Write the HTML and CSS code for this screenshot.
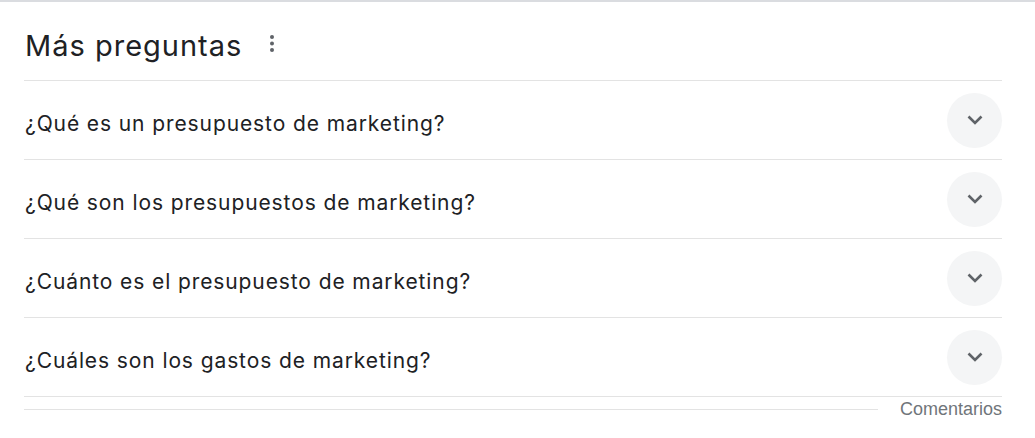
FILE: index.html
```html
<!DOCTYPE html>
<html>
<head>
	<title>Más preguntas</title>
	<link rel="stylesheet" href="styles.css">
</head>
<body>
	<div class="container">
		<div class="header">
			<h2>Más preguntas</h2>
			<span class="menu-dots">
				<svg width="4" height="17" viewBox="0 0 4 17"><circle cx="2" cy="2" r="2"/><circle cx="2" cy="8.5" r="2"/><circle cx="2" cy="15" r="2"/></svg>
			</span>
		</div>

		<div class="question">
			<span>¿Qué es un presupuesto de marketing?</span>
			<button class="expand"><svg width="16" height="10" viewBox="0 0 16 10"><path d="M1.5 1.5 8 8l6.5-6.5" /></svg></button>
		</div>
		<div class="question">
			<span>¿Qué son los presupuestos de marketing?</span>
			<button class="expand"><svg width="16" height="10" viewBox="0 0 16 10"><path d="M1.5 1.5 8 8l6.5-6.5" /></svg></button>
		</div>
		<div class="question">
			<span>¿Cuánto es el presupuesto de marketing?</span>
			<button class="expand"><svg width="16" height="10" viewBox="0 0 16 10"><path d="M1.5 1.5 8 8l6.5-6.5" /></svg></button>
		</div>
		<div class="question">
			<span>¿Cuáles son los gastos de marketing?</span>
			<button class="expand"><svg width="16" height="10" viewBox="0 0 16 10"><path d="M1.5 1.5 8 8l6.5-6.5" /></svg></button>
		</div>

		<div class="footer">
			<div class="footer-line"></div>
			<span class="feedback">Comentarios</span>
		</div>
	</div>
</body>
</html>
```

FILE: styles.css
```css
body {
	margin: 0;
	background-color: #fff;
	color: #202124;
	font-family: 'Inter', sans-serif;
	border-top: 2px solid #dadce0;
}
.container {
	padding: 0 33px 0 24px;
}
.header {
	display: flex;
	align-items: center;
	height: 78px;
	border-bottom: 1px solid #e3e3e3;
}
.header h2 {
	margin: 8px 0 0 1px;
	font-weight: 400;
	font-size: 29px;
	letter-spacing: 1px;
}
.menu-dots {
	display: flex;
	margin: 4px 0 0 28px;
	fill: #5f6368;
}
.question {
	display: flex;
	align-items: center;
	justify-content: space-between;
	height: 78px;
	border-bottom: 1px solid #e3e3e3;
	font-size: 21px;
	letter-spacing: 0.9px;
}
.question span {
	padding: 6px 0 0 1px;
}
.expand {
	display: flex;
	align-items: center;
	justify-content: center;
	width: 55px;
	height: 55px;
	border: none;
	border-radius: 50%;
	background-color: #f4f5f6;
	padding: 0;
	cursor: pointer;
}
.expand svg {
	fill: none;
	stroke: #5f6368;
	stroke-width: 2.6;
}
.question:last-of-type {
	border-bottom: none;
}
.footer {
	display: flex;
	align-items: center;
	height: 24px;
}
.footer-line {
	flex: 1;
	border-top: 1px solid #e3e3e3;
	margin-right: 22px;
}
.feedback {
	font-family: 'Liberation Sans', Arial, sans-serif;
	font-size: 18px;
	color: #70757a;
}
```
